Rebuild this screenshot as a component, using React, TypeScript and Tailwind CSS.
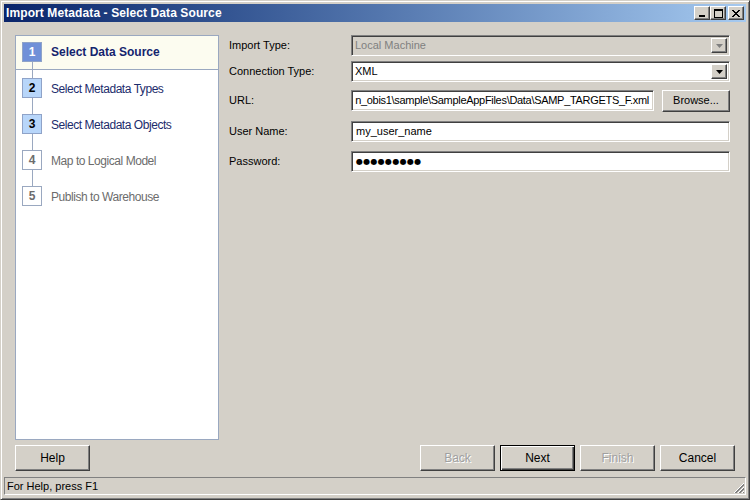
import type { ReactNode } from 'react'

const sunken =
  'border border-t-[#808080] border-l-[#808080] border-b-white border-r-white shadow-[inset_1px_1px_0_#404040,inset_-1px_-1px_0_#d4d0c8]'
const raised =
  'border border-t-white border-l-white border-b-[#404040] border-r-[#404040] shadow-[inset_-1px_-1px_0_#808080,inset_1px_1px_0_#d4d0c8]'

const steps = [
  { n: 1, label: 'Select Data Source', state: 'current' },
  { n: 2, label: 'Select Metadata Types', state: 'next' },
  { n: 3, label: 'Select Metadata Objects', state: 'next' },
  { n: 4, label: 'Map to Logical Model', state: 'off' },
  { n: 5, label: 'Publish to Warehouse', state: 'off' },
]

function TitleButton({ children }: { children: ReactNode }) {
  return (
    <div className={`flex h-[14px] w-[16px] items-center justify-center bg-[#d4d0c8] ${raised}`}>
      {children}
    </div>
  )
}

function DropArrow({ disabled }: { disabled?: boolean }) {
  return (
    <div className={`flex h-full w-[16px] shrink-0 items-center justify-center bg-[#d4d0c8] ${raised}`}>
      <svg width="7" height="4" viewBox="0 0 7 4">
        <path d="M0 0h7L3.5 4z" fill={disabled ? '#808080' : '#000'} />
      </svg>
    </div>
  )
}

function Button({ label, disabled, primary }: { label: string; disabled?: boolean; primary?: boolean }) {
  return (
    <div
      className={`flex h-[26px] w-[75px] items-center justify-center bg-[#d4d0c8] text-[12px] ${
        primary
          ? 'border border-black shadow-[inset_1px_1px_0_white,inset_-1px_-1px_0_#404040,inset_-2px_-2px_0_#808080]'
          : raised
      } ${disabled ? 'text-[#a0a0a0] [text-shadow:1px_1px_0_white]' : 'text-black'}`}
    >
      {label}
    </div>
  )
}

function FormRow({ label, top, children }: { label: string; top: string; children: ReactNode }) {
  return (
    <div className={`flex h-[21px] items-center ${top}`}>
      <div className="w-[122px] shrink-0 text-[11px] text-black">{label}</div>
      {children}
    </div>
  )
}

export default function App() {
  return (
    <div
      className="flex h-[500px] w-[750px] flex-col overflow-hidden border border-t-[#d4d0c8] border-l-[#d4d0c8] border-b-[#404040] border-r-[#404040] bg-[#d4d0c8] shadow-[inset_1px_1px_0_white,inset_-1px_-1px_0_#808080] p-[3px]"
      style={{ fontFamily: '"Liberation Sans", Arial, sans-serif' }}
    >
      {/* title bar */}
      <div className="flex h-[18px] shrink-0 items-center justify-between bg-gradient-to-r from-[#0a246a] to-[#a6caf0] pl-[2px] pr-[2px]">
        <span className="text-[12px] font-bold tracking-[0.1px] text-white">Import Metadata - Select Data Source</span>
        <div className="flex items-center">
          <TitleButton>
            <div className="mt-[6px] h-[2px] w-[6px] bg-black" />
          </TitleButton>
          <TitleButton>
            <div className="h-[9px] w-[9px] border border-t-2 border-black" />
          </TitleButton>
          <div className="ml-[2px]">
            <TitleButton>
              <svg width="8" height="7" viewBox="0 0 8 7">
                <path d="M0 0L7 7M1 0L8 7M7 0L0 7M8 0L1 7" stroke="#000" strokeWidth="1" />
              </svg>
            </TitleButton>
          </div>
        </div>
      </div>

      {/* body */}
      <div className="flex flex-1 flex-col px-[11px] pt-[13px]">
        <div className="flex h-[405px] gap-[10px]">
          {/* steps panel */}
          <div className="flex w-[204px] shrink-0 flex-col border border-[#9aa8c0] bg-white">
            {steps.map((s, i) => {
              const first = i === 0
              const last = i === steps.length - 1
              const box =
                s.state === 'current'
                  ? 'bg-[#7090d8] text-white border-[#8fa3c8]'
                  : s.state === 'next'
                  ? 'bg-[#b8d6fa] text-black border-[#8fa3c8]'
                  : 'bg-white text-[#6c6c6c] border-[#9aa8c0]'
              const text =
                s.state === 'current'
                  ? 'font-bold text-[#14246e]'
                  : s.state === 'next'
                  ? 'tracking-[-0.45px] text-[#1c2c6c]'
                  : 'tracking-[-0.45px] text-[#6c6c6c]'
              return (
                <div
                  key={s.n}
                  className={`flex gap-[9px] pl-[6px] ${
                    first ? 'h-[34px] border-b border-[#9aa8c0] bg-[#fcfcf0]' : 'h-[36px]'
                  }`}
                >
                  <div className="flex w-[20px] flex-col items-center">
                    <div className={`w-px ${first ? 'h-[6px]' : 'h-[8px] bg-[#9aa8c0]'}`} />
                    <div className={`flex h-[20px] w-[20px] items-center justify-center border text-[12px] font-bold ${box}`}>
                      {s.n}
                    </div>
                    <div className={`w-px flex-1 ${last ? '' : 'bg-[#9aa8c0]'} ${first ? '-mb-px' : ''}`} />
                  </div>
                  <div className={`flex h-full items-center text-[12px] ${first ? 'pb-[2px]' : 'pt-[1px]'} ${text}`}>
                    {s.label}
                  </div>
                </div>
              )
            })}
          </div>

          {/* form */}
          <div className="flex flex-1 flex-col pr-[5px]">
            <FormRow label="Import Type:" top="">
              <div className={`flex h-full flex-1 items-center bg-[#d4d0c8] p-[2px] ${sunken}`}>
                <div className="flex-1 pl-[1px] text-[11px] text-[#808080]">Local Machine</div>
                <DropArrow disabled />
              </div>
            </FormRow>
            <FormRow label="Connection Type:" top="mt-[5px]">
              <div className={`flex h-full flex-1 items-center bg-white p-[2px] ${sunken}`}>
                <div className="flex-1 pl-[1px] text-[11px] text-black">XML</div>
                <DropArrow />
              </div>
            </FormRow>
            <FormRow label="URL:" top="mt-[8px]">
              <div className={`flex h-full w-[303px] items-center justify-end overflow-hidden bg-white pr-[4px] ${sunken}`}>
                <span className="whitespace-nowrap text-[11px] tracking-[-0.3px] text-black">
                  n_obis1\sample\SampleAppFiles\Data\SAMP_TARGETS_F.xml
                </span>
              </div>
              <div className={`ml-[8px] flex h-[22px] flex-1 items-center justify-center bg-[#d4d0c8] text-[11px] text-black ${raised}`}>
                Browse...
              </div>
            </FormRow>
            <FormRow label="User Name:" top="mt-[10px]">
              <div className={`flex h-full flex-1 items-center bg-white px-[4px] text-[11px] text-black ${sunken}`}>
                my_user_name
              </div>
            </FormRow>
            <FormRow label="Password:" top="mt-[9px]">
              <div className={`flex h-full flex-1 items-center bg-white px-[4px] text-[11px] text-black ${sunken}`}>
                <span className="tracking-[0.3px]" style={{ fontFamily: '"DejaVu Sans", sans-serif', fontSize: 8 }}>
                  ●●●●●●●●●
                </span>
              </div>
            </FormRow>
          </div>
        </div>

        {/* buttons */}
        <div className="mt-[5px] flex items-center">
          <Button label="Help" />
          <div className="ml-auto flex gap-[5px]">
            <Button label="Back" disabled />
            <Button label="Next" primary />
            <Button label="Finish" disabled />
            <Button label="Cancel" />
          </div>
        </div>
      </div>

      {/* status bar */}
      <div className="mb-[1px] flex h-[18px] shrink-0 items-center border border-t-[#808080] border-l-[#808080] border-b-white border-r-white pl-[2px] text-[11px] text-black">
        <span className="flex-1">For Help, press F1</span>
        <svg width="12" height="12" viewBox="0 0 12 12" className="self-end">
          <path d="M11 1L1 11M11 5L5 11M11 9L9 11" stroke="#fff" strokeWidth="1" />
          <path d="M11 2L2 11M11 3L3 11M11 6L6 11M11 7L7 11M11 10L10 11" stroke="#808080" strokeWidth="1" />
        </svg>
      </div>
    </div>
  )
}
